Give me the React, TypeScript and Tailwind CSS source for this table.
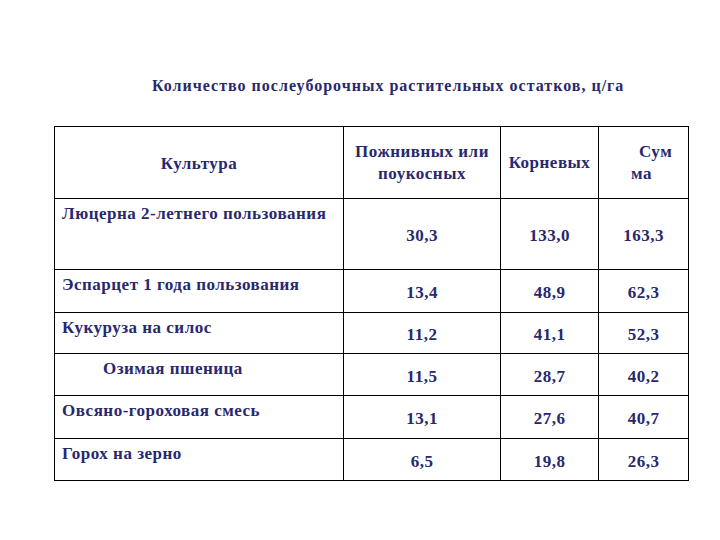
import React from 'react';

const rows = [
  { name: 'Люцерна 2-летнего пользования', a: '30,3', b: '133,0', c: '163,3', h: 'h-[71px]', top: true, indent: false },
  { name: 'Эспарцет 1 года пользования', a: '13,4', b: '48,9', c: '62,3', h: 'h-[43px]', top: false, indent: false },
  { name: 'Кукуруза на силос', a: '11,2', b: '41,1', c: '52,3', h: 'h-[41px]', top: false, indent: false },
  { name: 'Озимая пшеница', a: '11,5', b: '28,7', c: '40,2', h: 'h-[42px]', top: false, indent: true },
  { name: 'Овсяно-гороховая смесь', a: '13,1', b: '27,6', c: '40,7', h: 'h-[43px]', top: false, indent: false },
  { name: 'Горох на зерно', a: '6,5', b: '19,8', c: '26,3', h: 'h-[42px]', top: false, indent: false },
];

export default function App() {
  return (
    <div className="w-[720px] h-[540px] bg-white text-[#28286e] font-bold [font-family:'Liberation_Serif','Times_New_Roman',serif] overflow-hidden">
      <div className="pt-[76px] pl-[152px] text-[16px] leading-[20px] tracking-[1px] whitespace-nowrap">
        Количество послеуборочных растительных остатков, ц/га
      </div>
      <table className="mt-[30px] ml-[54px] w-[635px] table-fixed border-collapse border border-black text-[17px] leading-[20px] tracking-[0.5px]">
        <colgroup>
          <col className="w-[289px]" />
          <col className="w-[157px]" />
          <col className="w-[98px]" />
          <col className="w-[90px]" />
        </colgroup>
        <tbody>
          <tr className="h-[72px]">
            <td className="border border-black text-center align-middle pt-[2px]">Культура</td>
            <td className="border border-black text-center align-middle leading-[22px] whitespace-nowrap">
              Пожнивных или
              <br />
              поукосных
            </td>
            <td className="border border-black text-center align-middle whitespace-nowrap">Корневых</td>
            <td className="border border-black align-middle pl-[32px] leading-[22px]">
              <span className="pl-[8px]">Сум</span>
              <br />
              ма
            </td>
          </tr>
          {rows.map((r) => (
            <tr key={r.name} className={r.h}>
              <td className={`border border-black align-top whitespace-nowrap pl-[7px] ${r.top ? 'pt-[5px]' : 'pt-[5px]'}`}>
                <span className={r.indent ? 'pl-[41px]' : ''}>{r.name}</span>
              </td>
              <td className="border border-black text-center align-middle pt-[4px]">{r.a}</td>
              <td className="border border-black text-center align-middle pt-[4px]">{r.b}</td>
              <td className="border border-black text-center align-middle pt-[4px]">{r.c}</td>
            </tr>
          ))}
        </tbody>
      </table>
    </div>
  );
}
